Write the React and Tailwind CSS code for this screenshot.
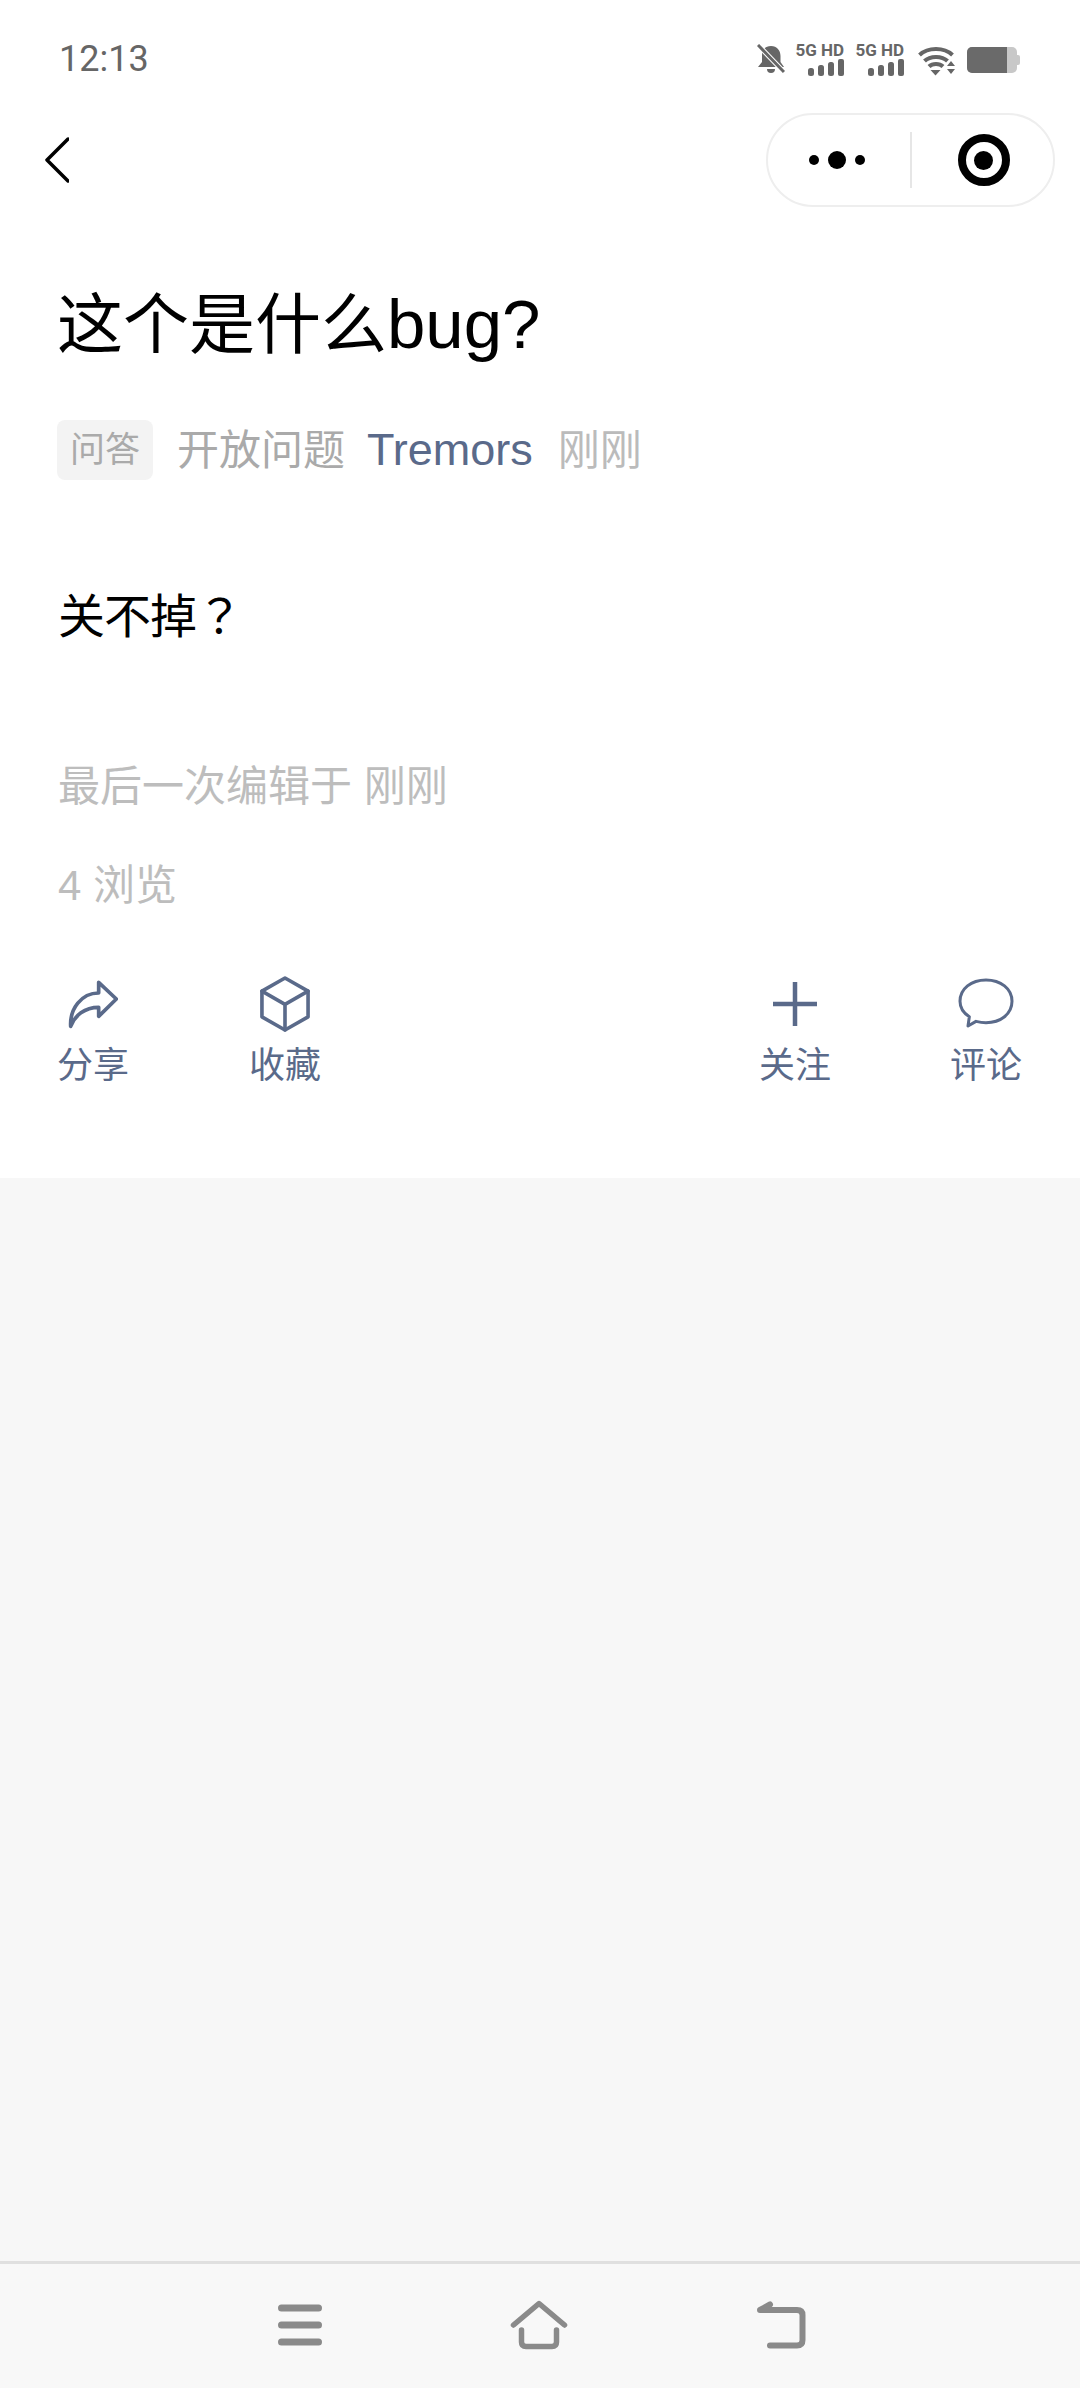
const SANS = 'font-["Liberation_Sans","Noto_Sans_CJK_SC",sans-serif]';

const Signal = () => (
  <div className="flex flex-col items-end w-[49px]">
    <span className='font-["Roboto",sans-serif] font-bold text-[17px] leading-[15px] whitespace-nowrap text-[#666]'>5G HD</span>
    <svg width="36" height="17" viewBox="0 0 36 17" fill="#666" className="mt-[1px]">
      <rect x="0" y="9" width="6" height="8" rx="2.5" />
      <rect x="10" y="6" width="6" height="11" rx="2.5" />
      <rect x="20" y="3" width="6" height="14" rx="2.5" />
      <rect x="30" y="0" width="6" height="17" rx="2" />
    </svg>
  </div>
);

const StatusBar = () => (
  <div className="h-[113px] pl-[59px] pr-[60px] flex items-start justify-between">
    <div className='pt-[38px] font-["Roboto",sans-serif] text-[36px] leading-[42px] text-[#666]'>12:13</div>
    <div className="pt-[43px] flex items-start">
      {/* bell muted */}
      <svg width="28" height="30" viewBox="0 0 28 30" fill="#666" className="mt-[1px]">
        <path d="M14 2c6 0 9.500 4.500 9.500 10v6l3.500 5H1l4-5v-7C5 6 8 2 14 2z" />
        <path d="M10 25h8a4 4 0 0 1-8 0z" />
        <path d="M1 1l26 27" stroke="#fff" strokeWidth="5" />
        <path d="M1 1l26 27" stroke="#666" strokeWidth="3" />
      </svg>
      <div className="ml-[10px]"><Signal /></div>
      <div className="ml-[11px]"><Signal /></div>
      {/* wifi */}
      <svg width="38" height="30" viewBox="0 0 38 30" fill="none" className="ml-[14px] mt-[3px]">
        <path d="M1.500 9C10 1 26 1 34.500 9" stroke="#666" strokeWidth="4" />
        <path d="M6.500 15C12 9.500 24 9.500 29.500 15" stroke="#666" strokeWidth="4" />
        <path d="M11 20.500C14.500 17 21.500 17 25 20.500" stroke="#666" strokeWidth="4" />
        <path d="M12.500 24h10L17.500 29.500z" fill="#666" />
        <path d="M33 15l4 5h-8zM29 23h8l-4 5z" fill="#666" />
      </svg>
      {/* battery */}
      <div className="ml-[11px] mt-[4px] flex items-center">
        <div className="w-[50px] h-[26px] rounded-[5px] bg-[#c8c8c8] overflow-hidden">
          <div className="w-[40px] h-full bg-[#6a6a6a]" />
        </div>
        <div className="w-[3px] h-[10px] rounded-r-[2px] bg-[#c8c8c8]" />
      </div>
    </div>
  </div>
);

const NavBar = () => (
  <div className="h-[94px] pl-[45px] pr-[25px] flex items-center justify-between">
    <svg width="24" height="46" viewBox="0 0 24 46" fill="none" stroke="#000" strokeWidth="3.500" strokeLinecap="round" strokeLinejoin="round">
      <path d="M23 2L2 23l21 21" />
    </svg>
    <div className="w-[289px] h-[94px] rounded-full border-2 border-[#eeeeee] flex items-center">
      <div className="flex-1 flex items-center justify-center gap-[9px] pr-[3px]">
        <span className="w-[10px] h-[10px] rounded-full bg-black" />
        <span className="w-[18px] h-[18px] rounded-full bg-black" />
        <span className="w-[10px] h-[10px] rounded-full bg-black" />
      </div>
      <div className="w-[2px] h-[56px] bg-[#e6e6e6]" />
      <div className="flex-1 flex items-center justify-center pl-[3px]">
        <div className="w-[52px] h-[52px] rounded-full border-[8px] border-black flex items-center justify-center">
          <span className="w-[19px] h-[19px] rounded-full bg-black" />
        </div>
      </div>
    </div>
  </div>
);

const ShareIcon = () => (
  <svg width="50" height="50" viewBox="0 0 150 150" fill="none" stroke="#5a6a8a" strokeWidth="11" strokeLinejoin="round" strokeLinecap="round">
    <path d="M92 10L145 60 92 112V85C50 85 20 110 8 142 5 90 40 42 92 42Z" />
  </svg>
);

const CubeIcon = () => (
  <svg width="50" height="56" viewBox="0 0 150 170" fill="none" stroke="#5a6a8a" strokeWidth="11" strokeLinejoin="round" strokeLinecap="round">
    <path d="M75 6L145 46V124L75 164 5 124V46Z" />
    <path d="M5 46L75 86 145 46M75 86V164" />
  </svg>
);

const PlusIcon = () => (
  <svg width="46" height="46" viewBox="0 0 46 46" fill="none" stroke="#5a6a8a" strokeWidth="4.500">
    <path d="M23 1V45M1 23H45" />
  </svg>
);

const BubbleIcon = () => (
  <svg width="56" height="52" viewBox="0 0 168 156" fill="none" stroke="#5a6a8a" strokeWidth="9" strokeLinejoin="round">
    <path d="M84 6C128 6 162 32 162 70 162 108 128 134 84 134 72 134 62 132 54 130L30 144 34 116C14 104 6 88 6 70 6 32 40 6 84 6Z" />
  </svg>
);

const Action = ({ icon, label }) => (
  <div className="w-[72px] flex flex-col items-center">
    <div className="h-[56px] flex items-center justify-center">{icon}</div>
    <span className="mt-[14px] text-[36px] leading-[40px] whitespace-nowrap text-[#5a6a8a]">{label}</span>
  </div>
);

const Post = () => (
  <div className={`bg-white h-[971px] pt-[78px] pl-[58px] pr-[59px] ${SANS}`}>
    <h1 className="-ml-[1px] text-[66px] leading-[80px] font-normal text-black whitespace-nowrap">
      这个是什么<span className="text-[69px]">bug?</span>
    </h1>
    <div className="mt-[55px] flex items-center h-[60px] text-[42px] whitespace-nowrap">
      <span className="w-[96px] h-[60px] -ml-[1px] rounded-[8px] bg-[#f3f3f3] text-[35px] text-[#aaaaaa] flex items-center justify-center">问答</span>
      <span className="ml-[24px] text-[#aaaaaa]">开放问题</span>
      <span className="ml-[22px] text-[45px] text-[#5a6a8a]">Tremors</span>
      <span className="ml-[25px] text-[#bbbbbb]">刚刚</span>
    </div>
    <p className="mt-[103px] text-[47px] leading-[60px] text-black whitespace-nowrap tracking-[-1px]">
      关不掉<span className='font-["Noto_Sans_CJK_TC",sans-serif]'>？</span>
    </p>
    <p className="mt-[115px] text-[42px] leading-[50px] text-[#bdbdbd]">最后一次编辑于 刚刚</p>
    <p className="mt-[49px] text-[42px] leading-[50px] text-[#bdbdbd]">4 浏览</p>
    <div className="mt-[65px] -mx-[1px] flex items-start justify-between">
      <div className="flex gap-[120px]">
        <Action icon={<ShareIcon />} label="分享" />
        <Action icon={<CubeIcon />} label="收藏" />
      </div>
      <div className="flex gap-[119px]">
        <Action icon={<PlusIcon />} label="关注" />
        <Action icon={<BubbleIcon />} label="评论" />
      </div>
    </div>
  </div>
);

const BottomBar = () => (
  <div className="h-[127px] border-t-[3px] border-[#e0e0e0] bg-[#f8f8f8] flex items-center justify-center gap-[188px] pb-[2px] pl-[3px]">
    <svg width="44" height="42" viewBox="0 0 44 42" fill="none" stroke="#8a8a8a" strokeWidth="7" strokeLinecap="round">
      <path d="M3.500 4H40.500M3.500 21H40.500M3.500 38H40.500" />
    </svg>
    <svg width="58" height="50" viewBox="0 0 58 50" fill="none" stroke="#8a8a8a" strokeWidth="5.500" strokeLinecap="round" strokeLinejoin="round">
      <path d="M3.500 25L29 3.500 54.500 25" />
      <path d="M11.500 30V42Q11.500 46.500 16 46.500H42Q46.500 46.500 46.500 42V30" />
    </svg>
    <svg width="50" height="48" viewBox="0 0 50 48" fill="none" stroke="#8a8a8a" strokeWidth="6" strokeLinecap="round" strokeLinejoin="round">
      <path d="M14 44.500H41Q46.500 44.500 46.500 39V14Q46.500 9 41 9H4L14 3.500" />
    </svg>
  </div>
);

export default function App() {
  return (
    <div className="w-[1080px] h-[2388px] flex flex-col bg-[#f7f7f7] overflow-hidden">
      <div className="bg-white">
        <StatusBar />
        <NavBar />
      </div>
      <Post />
      <div className="flex-1" />
      <BottomBar />
    </div>
  );
}
